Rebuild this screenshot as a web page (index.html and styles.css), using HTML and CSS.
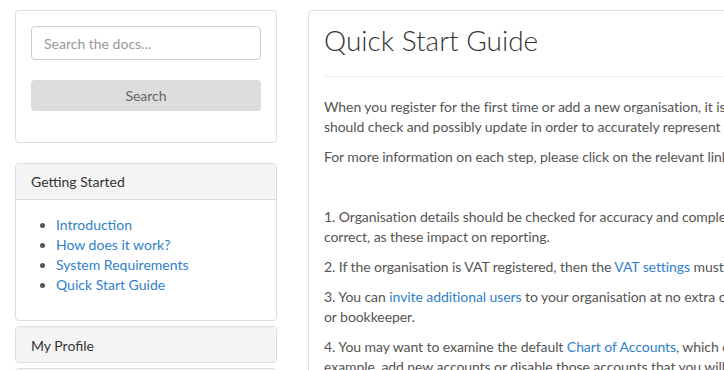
FILE: index.html
```html
<!DOCTYPE html>
<html>
<head>
  <title>Quick Start Guide</title>
  <link rel="stylesheet" href="styles.css">
</head>
<body>
  <div class="page">
    <aside class="sidebar">
      <div class="panel search-panel">
        <form class="search-form">
          <input type="text" class="search-input" placeholder="Search the docs...">
          <button type="submit" class="search-btn">Search</button>
        </form>
      </div>

      <div class="panel small">
        <div class="panel-heading">Getting Started</div>
        <div class="panel-body">
          <ul class="nav-list">
            <li><a href="#">Introduction</a></li>
            <li><a href="#">How does it work?</a></li>
            <li><a href="#">System Requirements</a></li>
            <li><a href="#">Quick Start Guide</a></li>
          </ul>
        </div>
      </div>

      <div class="panel small">
        <div class="panel-heading closed">My Profile</div>
      </div>

      <div class="panel small">
        <div class="panel-heading closed">Organisation</div>
      </div>
    </aside>

    <main class="content">
      <div class="panel article">
        <h1>Quick Start Guide</h1>
        <hr>
        <p>When you register for the first time or add a new organisation, it is important to review a number of settings which you<br>
        should check and possibly update in order to accurately represent your business and its reporting requirements.</p>
        <p>For more information on each step, please click on the relevant link below.</p>
        <p>&nbsp;</p>
        <p>1. Organisation details should be checked for accuracy and completeness, and the financial year end and lock date must be<br>
        correct, as these impact on reporting.</p>
        <p>2. If the organisation is VAT registered, then the <a href="#">VAT settings</a> must be entered before any transactions are recorded.</p>
        <p>3. You can <a href="#">invite additional users</a> to your organisation at no extra cost, for example a colleague, your accountant<br>
        or bookkeeper.</p>
        <p>4. You may want to examine the default <a href="#">Chart of Accounts</a>, which can be tailored to suit your business. You can, for<br>
        example, add new accounts or disable those accounts that you will not need.</p>
      </div>
    </main>
  </div>
</body>
</html>
```

FILE: styles.css
```css
body {
  margin: 0;
  font-family: Lato, "Open Sans", sans-serif;
  font-size: 14px;
  line-height: 20px;
  color: #555;
  background: #fff;
}

a {
  color: #2f7fca;
  text-decoration: none;
}

.page {
  width: 1170px;
  display: grid;
  grid-template-columns: 292px 878px;
  padding-top: 10px;
}

.sidebar {
  padding: 0 15px 0 15px;
}

.content {
  padding: 0 15px 0 16px;
}

.panel {
  border: 1px solid #ddd;
  border-radius: 4px;
  background: #fff;
  margin-bottom: 20px;
}

.panel.small {
  margin-bottom: 5px;
}

.panel-heading {
  background: #f4f4f4;
  color: #333;
  padding: 8px 15px;
  height: 19px;
  line-height: 20px;
  font-size: 14px;
  border-bottom: 1px solid #ddd;
  border-radius: 3px 3px 0 0;
}

.panel-heading.closed {
  border-bottom: none;
  border-radius: 3px;
  height: 18px;
  padding: 9px 15px 8px;
}

.panel-body {
  padding: 15px 15px 25px;
}

.search-panel {
  padding: 15px 15px 31px;
}

.search-form {
  display: flex;
  flex-direction: column;
  gap: 20px;
}

.search-input {
  box-sizing: border-box;
  height: 34px;
  width: 100%;
  padding: 6px 12px;
  border: 1px solid #ccc;
  border-radius: 4px;
  font-family: Lato, sans-serif;
  font-size: 14px;
  color: #555;
}

.search-input::placeholder {
  color: #999;
}

.search-btn {
  height: 31px;
  width: 100%;
  padding: 0;
  border: none;
  border-radius: 4px;
  background: #dddddd;
  color: #666;
  font-family: Lato, sans-serif;
  font-size: 14px;
}

.nav-list {
  margin: 0;
  padding-left: 25px;
}

.article {
  padding: 13px 15px 15px;
  border-radius: 4px 0 0 4px;
}

.article h1 {
  margin: 0;
  font-size: 28px;
  line-height: 33px;
  font-weight: 300;
  color: #333;
}

.article hr {
  border: 0;
  border-top: 1px solid #eee;
  margin: 19px 0 20px;
}

.article p {
  margin: 0 0 10px;
  letter-spacing: -0.07px;
}
```
